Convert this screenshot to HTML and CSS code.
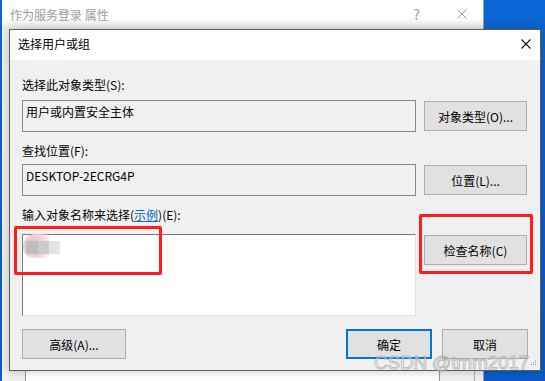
FILE: index.html
```html
<!DOCTYPE html>
<html lang="zh-CN">
<head>
  <meta charset="UTF-8">
  <title>选择用户或组</title>
  <link rel="stylesheet" href="styles.css">
</head>
<body>

  <div class="desktop">

    <!-- window behind the dialog -->
    <div class="back-window">
      <div class="back-title">
        <span class="back-caption">作为服务登录 属性</span>
        <span class="back-help">?</span>
        <svg class="back-close" width="10" height="10" viewBox="0 0 10 10">
          <path d="M0.5 0.5 L9.5 9.5 M9.5 0.5 L0.5 9.5" stroke="#9a9a9a" stroke-width="1" fill="none"/>
        </svg>
      </div>
      <div class="back-body">
        <div class="back-list"></div>
        <div class="back-gap"></div>
        <div class="back-side"></div>
      </div>
    </div>

    <div class="dialog">
      <div class="title-bar">
        <span class="title">选择用户或组</span>
        <svg class="close" width="10" height="10" viewBox="0 0 10 10">
          <path d="M0.5 0.5 L9.5 9.5 M9.5 0.5 L0.5 9.5" stroke="#111" stroke-width="1.1" fill="none"/>
        </svg>
      </div>

      <div class="dialog-body">
        <div class="label">选择此对象类型(S):</div>
        <div class="row">
          <div class="textbox">用户或内置安全主体</div>
          <button class="btn side-btn">对象类型(O)...</button>
        </div>

        <div class="label spaced">查找位置(F):</div>
        <div class="row">
          <div class="textbox">DESKTOP-2ECRG4P</div>
          <button class="btn side-btn">位置(L)...</button>
        </div>

        <div class="label spaced wide">输入对象名称来选择(<a href="#" class="link">示例</a>)(E):</div>
        <div class="row">
          <div class="names">
            <div class="smudge">
              <span class="blk b1"></span><span class="blk b2"></span><span class="blk b3"></span>
            </div>
          </div>
          <button class="btn side-btn">检查名称(C)</button>
        </div>

        <div class="footer">
          <button class="btn advanced">高级(A)...</button>
          <div class="footer-right">
            <button class="btn ok">确定</button>
            <button class="btn cancel">取消</button>
          </div>
        </div>
      </div>

      <svg class="grip" width="6" height="6" viewBox="0 0 6 6">
        <rect x="4" y="0" width="1" height="1" fill="#a0a0a0"/>
        <rect x="2" y="2" width="1" height="1" fill="#a0a0a0"/>
        <rect x="4" y="2" width="1" height="1" fill="#a0a0a0"/>
        <rect x="0" y="4" width="1" height="1" fill="#a0a0a0"/>
        <rect x="2" y="4" width="1" height="1" fill="#a0a0a0"/>
        <rect x="4" y="4" width="1" height="1" fill="#a0a0a0"/>
      </svg>
    </div>

    <!-- screenshot annotations -->
    <div class="mark mark-names"></div>
    <div class="mark mark-check"></div>
    <div class="watermark">CSDN @tmm2017</div>
  </div>

</body>
</html>
```

FILE: styles.css
```css
* {
  box-sizing: border-box;
}

body {
  margin: 0;
  font-family: "Noto Sans CJK SC", "Noto Sans", sans-serif;
  font-size: 12px;
  color: #000;
}

.desktop {
  position: relative;
  width: 545px;
  height: 381px;
  overflow: hidden;
  background: linear-gradient(180deg, #0b66d4 0%, #0a5bc8 100%);
}

/* window behind */
.back-window {
  position: absolute;
  left: 2px;
  top: 0;
  width: 482px;
  height: 400px;
  background-color: #f0f0f0;
  border-right: 1px solid #8aa6c8;
}

.back-title {
  display: flex;
  align-items: center;
  height: 30px;
  padding: 0 0 2px 8px;
  background: linear-gradient(180deg, #ffffff 0%, #ffffff 60%, #e9e9e9 100%);
}

.back-caption {
  flex: 1;
  color: #9d9d9d;
}

.back-help {
  color: #9d9d9d;
  font-size: 14px;
  margin-right: 37px;
}

.back-close {
  margin-right: 16px;
}

.back-body {
  display: flex;
  margin-top: 340px;
  height: 30px;
  padding-left: 23px;
}

.back-list {
  width: 415px;
  background-color: #fff;
  border-left: 1px solid #9a9a9a;
  border-right: 1px solid #9a9a9a;
}

.back-gap {
  width: 35px;
  border-right: 1px solid #b0b0b0;
}

/* dialog */
.dialog {
  position: absolute;
  left: 9px;
  top: 29px;
  width: 532px;
  height: 342px;
  background-color: #f0f0f0;
  border: 1px solid #5c5c5c;
  box-shadow: 0 0 10px rgba(0,0,0,0.22);
}

.title-bar {
  display: flex;
  align-items: center;
  height: 30px;
  padding: 0 9px 2px 8px;
  background-color: #fff;
}

.title {
  flex: 1;
  line-height: 16px;
}

.dialog-body {
  padding: 17px 12px 12px 12px;
}

.label {
  height: 16px;
  line-height: 16px;
  margin-bottom: 7px;
  white-space: nowrap;
}

.spaced {
  margin-top: 11px;
  margin-bottom: 5px;
}

.wide {
  margin-bottom: 11px;
}

.link {
  color: #0066cc;
  text-decoration: underline;
}

.row {
  display: flex;
  align-items: flex-start;
  gap: 8px;
}

.textbox {
  width: 394px;
  height: 32px;
  padding: 3px 3px;
  line-height: 16px;
  border: 1px solid #868686;
  background-color: #f0f0f0;
}

.names {
  position: relative;
  width: 394px;
  height: 82px;
  background-color: #fff;
  border-top: 1px solid #7a7a7a;
  border-left: 1px solid #7a7a7a;
  border-right: 1px solid #e3e3e3;
  border-bottom: 1px solid #e3e3e3;
}

.smudge {
  position: absolute;
  left: 0;
  top: -1px;
  width: 38px;
  height: 24px;
  border-radius: 12px 14px 10px 10px;
  background: radial-gradient(circle at 10px 12px, #e5c0c0 0, #eed4d4 11px, rgba(255,255,255,0) 21px);
}

.blk {
  position: absolute;
  top: 7px;
  height: 13px;
}

.b1 {
  left: 3px;
  width: 12px;
  background-color: #bdbdbd;
}

.b2 {
  left: 15px;
  width: 11px;
  background-color: #cbcbcb;
}

.b3 {
  left: 26px;
  width: 11px;
  background-color: #e4e4e6;
}

.btn {
  font-family: inherit;
  font-size: 12px;
  color: #000;
  background-color: #e1e1e1;
  border: 1px solid #adadad;
  padding: 0;
  height: 30px;
}

.side-btn {
  width: 103px;
  margin-top: 1px;
}

.footer {
  display: flex;
  justify-content: space-between;
  margin-top: 13px;
}

.footer-right {
  display: flex;
  gap: 10px;
}

.advanced {
  width: 104px;
}

.ok {
  width: 86px;
  border: 2px solid #0078d7;
}

.cancel {
  width: 86px;
}

.grip {
  position: absolute;
  right: 3px;
  bottom: 4px;
}

/* annotations on the screenshot */
.mark {
  position: absolute;
  border: 3px solid #ff1c1c;
  border-radius: 2px;
}

.mark-names {
  left: 14px;
  top: 226px;
  width: 148px;
  height: 49px;
}

.mark-check {
  left: 419px;
  top: 214px;
  width: 114px;
  height: 60px;
}

.watermark {
  position: absolute;
  left: 374px;
  top: 351px;
  font-family: "Liberation Sans", Arial, sans-serif;
  font-size: 19px;
  line-height: 24px;
  color: rgba(255,255,255,0.6);
  -webkit-text-stroke: 1px rgba(120,120,120,0.45);
  letter-spacing: -0.2px;
  white-space: nowrap;
}
```
